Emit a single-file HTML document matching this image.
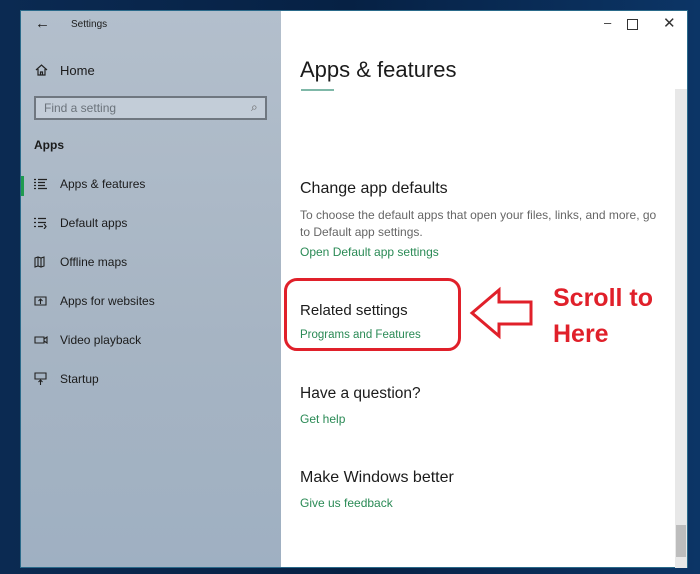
<!DOCTYPE html>
<html><head><style>
body{margin:0;width:700px;height:574px;overflow:hidden;background:linear-gradient(90deg,#0b2a52,#062144 50%,#0c3566);font-family:"Liberation Sans",sans-serif;position:relative}
.win{position:absolute;left:20px;top:10px;width:668px;height:558px;background:#fff;border:1px solid #2a6a8a;box-sizing:border-box}
.side{position:absolute;left:0;top:0;width:260px;height:100%;background:linear-gradient(180deg,#b3bfcc,#a6b4c3 60%,#9fb0c2)}
.t{position:absolute;white-space:nowrap;color:#1b1b1b}
.g{color:#2a8a55}
</style></head><body>
<div class="win">
<div class="side">
 <div class="t" style="left:14px;top:4px;font-size:15px">&#8592;</div>
 <div class="t" style="left:50px;top:8px;font-size:10px">Settings</div>
 <svg style="position:absolute;left:14px;top:53px" width="13" height="12"><path d="M1 6L6.5 1L12 6M3 5V11H10V5M5.5 11V8H7.5V11" fill="none" stroke="#222" stroke-width="1.2"/></svg>
 <div class="t" style="left:39px;top:52px;font-size:13px">Home</div>
 <div style="position:absolute;left:13px;top:85px;width:233px;height:24px;border:2px solid #6f7780;box-sizing:border-box;background:#c3cdd8"></div>
 <div class="t" style="left:23px;top:90px;font-size:12px;color:#6b737b">Find a setting</div>
 <div class="t" style="left:230px;top:89px;font-size:12px;color:#666">&#8981;</div>
 <div class="t" style="left:13px;top:127px;font-size:12px;font-weight:bold">Apps</div>
 <div style="position:absolute;left:0;top:165px;width:3px;height:20px;background:#1f9b4f"></div>
 <svg style="position:absolute;left:13px;top:167px" width="13" height="12"><path d="M0 1.5h2M4 1.5h9M0 4.5h2M4 4.5h7M0 7.5h2M4 7.5h7M0 10.5h2M4 10.5h9" stroke="#222" stroke-width="1.3"/></svg>
 <div class="t" style="left:39px;top:166px;font-size:12px">Apps &amp; features</div>
 <svg style="position:absolute;left:13px;top:206px" width="13" height="12"><path d="M0 1.5h2M4 1.5h8M0 5.5h2M4 5.5h8M0 9.5h2M4 9.5h5M10 7l2 2.5-2 2.5" stroke="#222" stroke-width="1.2" fill="none"/></svg>
 <div class="t" style="left:39px;top:205px;font-size:12px">Default apps</div>
 <svg style="position:absolute;left:13px;top:245px" width="13" height="12"><path d="M1 2l3-1 3 1 3-1v9l-3 1-3-1-3 1zM4 1v9M7 2v9" stroke="#222" stroke-width="1.1" fill="none"/></svg>
 <div class="t" style="left:39px;top:244px;font-size:12px">Offline maps</div>
 <svg style="position:absolute;left:13px;top:284px" width="13" height="12"><path d="M1 2h11v8H1zM6.5 9V4M4.5 6l2-2 2 2" stroke="#222" stroke-width="1.1" fill="none"/></svg>
 <div class="t" style="left:39px;top:283px;font-size:12px">Apps for websites</div>
 <svg style="position:absolute;left:13px;top:323px" width="14" height="12"><path d="M1 3h9v6H1zM10 5l3-2v6l-3-2" stroke="#222" stroke-width="1.1" fill="none"/></svg>
 <div class="t" style="left:39px;top:322px;font-size:12px">Video playback</div>
 <svg style="position:absolute;left:13px;top:361px" width="13" height="14"><path d="M1 1h11v6H1zM6.5 13V8M4.5 10l2-2 2 2" stroke="#222" stroke-width="1.1" fill="none"/></svg>
 <div class="t" style="left:39px;top:361px;font-size:12px">Startup</div>
</div>
<div class="t" style="left:583px;top:4px;font-size:13px;color:#333">&#8211;</div>
<div style="position:absolute;left:606px;top:8px;width:9px;height:9px;border:1px solid #333"></div>
<div class="t" style="left:642px;top:3px;font-size:15px;color:#333">&#10005;</div>
<div class="t" style="left:279px;top:46px;font-size:22px">Apps &amp; features</div>
<div style="position:absolute;left:280px;top:78px;width:33px;height:2px;background:#7fb8a8"></div>
<div class="t" style="left:279px;top:169px;font-size:16px">Change app defaults</div>
<div class="t" style="left:279px;top:196px;font-size:12px;color:#666;line-height:17px">To choose the default apps that open your files, links, and more, go<br>to Default app settings.</div>
<div class="t g" style="left:279px;top:234px;font-size:12px">Open Default app settings</div>
<div class="t" style="left:279px;top:291px;font-size:15px">Related settings</div>
<div class="t g" style="left:279px;top:318px;font-size:11.5px">Programs and Features</div>
<div class="t" style="left:279px;top:374px;font-size:15.5px">Have a question?</div>
<div class="t g" style="left:279px;top:401px;font-size:12px">Get help</div>
<div class="t" style="left:279px;top:458px;font-size:16px">Make Windows better</div>
<div class="t g" style="left:279px;top:485px;font-size:12px">Give us feedback</div>
<div style="position:absolute;left:654px;top:78px;width:12px;height:479px;background:#e8e8e8"></div>
<div style="position:absolute;left:655px;top:514px;width:10px;height:32px;background:#bdbdbd"></div>
</div>
<div style="position:absolute;left:284px;top:278px;width:177px;height:73px;border:3px solid #e0202a;border-radius:13px;box-sizing:border-box"></div>
<svg style="position:absolute;left:468px;top:285px" width="70" height="60"><path d="M4 28L31 5V17H63V39H31V51Z" fill="#fff" stroke="#e0202a" stroke-width="3" stroke-linejoin="miter"/></svg>
<div class="t" style="left:553px;top:280px;font-size:25px;font-weight:bold;color:#e0202a;line-height:36px">Scroll to<br>Here</div>
</body></html>
